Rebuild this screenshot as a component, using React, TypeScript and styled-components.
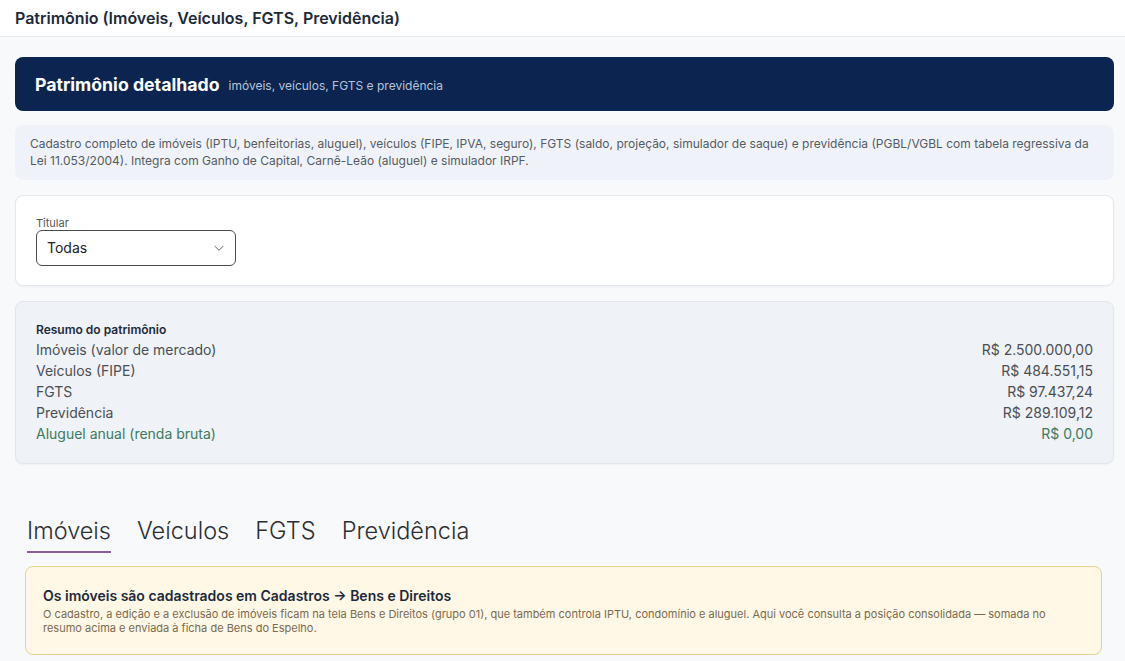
import React from "react";
import styled, { createGlobalStyle } from "styled-components";

const Global = createGlobalStyle`
  html, body { margin: 0; padding: 0; overflow: hidden; }
  body {
    background: #f8f9fb;
    font-family: Inter, "Noto Sans", sans-serif;
    color: #333;
  }
  * { box-sizing: border-box; }
`;

const TopBar = styled.header`
  height: 37px;
  background: #fff;
  border-bottom: 1px solid #e6e8ec;
  display: flex;
  align-items: center;
  padding: 0 15px;
`;

const PageTitle = styled.h1`
  margin: 0;
  font-size: 16px;
  font-weight: 600;
  color: #1d2a3b;
`;

const Main = styled.main`
  padding: 20px 11px 0 15px;
  display: flex;
  flex-direction: column;
`;

const Banner = styled.div`
  height: 54px;
  background: #0b2550;
  border-radius: 8px;
  display: flex;
  align-items: center;
  gap: 9px;
  padding: 0 20px;
`;

const BannerTitle = styled.span`
  font-size: 17.7px;
  font-weight: 700;
  color: #fff;
`;

const BannerSub = styled.span`
  font-size: 12px;
  color: #b8c4da;
  padding-top: 2px;
`;

const Intro = styled.div`
  margin-top: 14px;
  background: #eff3f9;
  border-radius: 8px;
  padding: 10px 15px 11px;
  font-size: 12px;
  line-height: 17px;
  color: #555b63;
`;

const Card = styled.section`
  margin-top: 15px;
  background: #fff;
  border: 1px solid #e4e7ec;
  border-radius: 8px;
  box-shadow: 0 1px 2px rgba(0, 0, 0, 0.04);
  padding: 20px 20px 19px;
`;

const FieldLabel = styled.label`
  display: block;
  font-size: 11px;
  color: #555;
  line-height: 14px;
`;

const SelectBox = styled.div`
  width: 200px;
  height: 36px;
  border: 1px solid #4a4a4a;
  border-radius: 6px;
  display: flex;
  align-items: center;
  justify-content: space-between;
  padding: 0 9px 1px 10px;
  font-size: 14px;
  color: #222;
`;

const Summary = styled.section`
  margin-top: 15px;
  background: #eff2f7;
  border: 1px solid #e2e6ec;
  border-radius: 8px;
  box-shadow: 0 1px 2px rgba(0, 0, 0, 0.04);
  padding: 20px 20px 19px;
`;

const SummaryTitle = styled.div`
  font-size: 12px;
  font-weight: 600;
  color: #1d2a3b;
  line-height: 15px;
  margin-bottom: 2px;
`;

const Row = styled.div<{ $accent?: boolean }>`
  display: flex;
  justify-content: space-between;
  font-size: 14px;
  line-height: 21px;
  color: ${(p) => (p.$accent ? "#3e7b5e" : "#4a4f55")};
`;

const TabBar = styled.nav`
  margin-top: 52px;
  padding-left: 12px;
  display: flex;
  gap: 26px;
`;

const Tab = styled.div<{ $active?: boolean }>`
  font-size: 23.5px;
  font-weight: 300;
  color: #2b2f33;
  padding-bottom: 6px;
  border-bottom: 2px solid ${(p) => (p.$active ? "#8c5d9c" : "transparent")};
`;

const Notice = styled.div`
  margin: 13px 12px 0 10px;
  background: #fff8e6;
  border: 1px solid #e6d28e;
  border-radius: 8px;
  padding: 20px 17px 19px;
`;

const NoticeTitle = styled.div`
  font-size: 14px;
  font-weight: 600;
  color: #1d2a3b;
  line-height: 18px;
`;

const NoticeText = styled.p`
  margin: 2px 0 0;
  font-size: 11px;
  line-height: 14px;
  color: #7b6a4f;
`;

const Chevron = () => (
  <svg width="14" height="14" viewBox="0 0 24 24" fill="none" stroke="#555" strokeWidth="1.6" strokeLinecap="round" strokeLinejoin="round">
    <path d="M5 9l7 7 7-7" />
  </svg>
);

const rows: { label: string; value: string; accent?: boolean }[] = [
  { label: "Imóveis (valor de mercado)", value: "R$ 2.500.000,00" },
  { label: "Veículos (FIPE)", value: "R$ 484.551,15" },
  { label: "FGTS", value: "R$ 97.437,24" },
  { label: "Previdência", value: "R$ 289.109,12" },
  { label: "Aluguel anual (renda bruta)", value: "R$ 0,00", accent: true },
];

export default function App() {
  return (
    <>
      <Global />
      <TopBar>
        <PageTitle>Patrimônio (Imóveis, Veículos, FGTS, Previdência)</PageTitle>
      </TopBar>
      <Main>
        <Banner>
          <BannerTitle>Patrimônio detalhado</BannerTitle>
          <BannerSub>imóveis, veículos, FGTS e previdência</BannerSub>
        </Banner>
        <Intro>
          Cadastro completo de imóveis (IPTU, benfeitorias, aluguel), veículos (FIPE, IPVA, seguro), FGTS (saldo, projeção,
          simulador de saque) e previdência (PGBL/VGBL com tabela regressiva da Lei 11.053/2004). Integra com Ganho de
          Capital, Carnê-Leão (aluguel) e simulador IRPF.
        </Intro>
        <Card>
          <FieldLabel>Titular</FieldLabel>
          <SelectBox>
            <span>Todas</span>
            <Chevron />
          </SelectBox>
        </Card>
        <Summary>
          <SummaryTitle>Resumo do patrimônio</SummaryTitle>
          {rows.map((r) => (
            <Row key={r.label} $accent={r.accent}>
              <span>{r.label}</span>
              <span>{r.value}</span>
            </Row>
          ))}
        </Summary>
        <TabBar>
          <Tab $active>Imóveis</Tab>
          <Tab>Veículos</Tab>
          <Tab>FGTS</Tab>
          <Tab>Previdência</Tab>
        </TabBar>
        <Notice>
          <NoticeTitle>Os imóveis são cadastrados em Cadastros → Bens e Direitos</NoticeTitle>
          <NoticeText>
            O cadastro, a edição e a exclusão de imóveis ficam na tela Bens e Direitos (grupo 01), que também controla IPTU,
            condomínio e aluguel. Aqui você consulta a posição consolidada — somada no resumo acima e enviada à ficha de Bens
            do Espelho.
          </NoticeText>
        </Notice>
      </Main>
    </>
  );
}
